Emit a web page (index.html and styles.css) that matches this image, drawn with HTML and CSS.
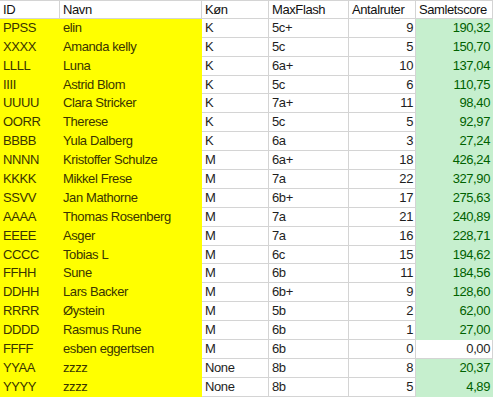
FILE: index.html
```html
<!DOCTYPE html>
<html>
<head>
<meta charset="utf-8">
<link rel="stylesheet" href="styles.css">
</head>
<body>
<div class="sheet">
  <div class="c h">ID</div><div class="c h">Navn</div><div class="c h">Køn</div><div class="c h">MaxFlash</div><div class="c h">Antalruter</div><div class="c h">Samletscore</div>

  <div class="c y">PPSS</div><div class="c y">elin</div><div class="c">K</div><div class="c">5c+</div><div class="c n">9</div><div class="c g">190,32</div>
  <div class="c y">XXXX</div><div class="c y">Amanda kelly</div><div class="c">K</div><div class="c">5c</div><div class="c n">5</div><div class="c g">150,70</div>
  <div class="c y">LLLL</div><div class="c y">Luna</div><div class="c">K</div><div class="c">6a+</div><div class="c n">10</div><div class="c g">137,04</div>
  <div class="c y">IIII</div><div class="c y">Astrid Blom</div><div class="c">K</div><div class="c">5c</div><div class="c n">6</div><div class="c g">110,75</div>
  <div class="c y">UUUU</div><div class="c y">Clara Stricker</div><div class="c">K</div><div class="c">7a+</div><div class="c n">11</div><div class="c g">98,40</div>
  <div class="c y">OORR</div><div class="c y">Therese</div><div class="c">K</div><div class="c">5c</div><div class="c n">5</div><div class="c g">92,97</div>
  <div class="c y">BBBB</div><div class="c y">Yula Dalberg</div><div class="c">K</div><div class="c">6a</div><div class="c n">3</div><div class="c g">27,24</div>
  <div class="c y">NNNN</div><div class="c y">Kristoffer Schulze</div><div class="c">M</div><div class="c">6a+</div><div class="c n">18</div><div class="c g">426,24</div>
  <div class="c y">KKKK</div><div class="c y">Mikkel Frese</div><div class="c">M</div><div class="c">7a</div><div class="c n">22</div><div class="c g">327,90</div>
  <div class="c y">SSVV</div><div class="c y">Jan Mathorne</div><div class="c">M</div><div class="c">6b+</div><div class="c n">17</div><div class="c g">275,63</div>
  <div class="c y">AAAA</div><div class="c y">Thomas Rosenberg</div><div class="c">M</div><div class="c">7a</div><div class="c n">21</div><div class="c g">240,89</div>
  <div class="c y">EEEE</div><div class="c y">Asger</div><div class="c">M</div><div class="c">7a</div><div class="c n">16</div><div class="c g">228,71</div>
  <div class="c y">CCCC</div><div class="c y">Tobias L</div><div class="c">M</div><div class="c">6c</div><div class="c n">15</div><div class="c g">194,62</div>
  <div class="c y">FFHH</div><div class="c y">Sune</div><div class="c">M</div><div class="c">6b</div><div class="c n">11</div><div class="c g">184,56</div>
  <div class="c y">DDHH</div><div class="c y">Lars Backer</div><div class="c">M</div><div class="c">6b+</div><div class="c n">9</div><div class="c g">128,60</div>
  <div class="c y">RRRR</div><div class="c y">Øystein</div><div class="c">M</div><div class="c">5b</div><div class="c n">2</div><div class="c g">62,00</div>
  <div class="c y">DDDD</div><div class="c y">Rasmus Rune</div><div class="c">M</div><div class="c">6b</div><div class="c n">1</div><div class="c g">27,00</div>
  <div class="c y">FFFF</div><div class="c y">esben eggertsen</div><div class="c">M</div><div class="c">6b</div><div class="c n">0</div><div class="c n">0,00</div>
  <div class="c y">YYAA</div><div class="c y">zzzz</div><div class="c">None</div><div class="c">8b</div><div class="c n">8</div><div class="c g">20,37</div>
  <div class="c y">YYYY</div><div class="c y">zzzz</div><div class="c">None</div><div class="c">8b</div><div class="c n">5</div><div class="c g">4,89</div>
</div>
</body>
</html>
```

FILE: styles.css
```css
html, body {
  margin: 0;
  padding: 0;
  background: #ffffff;
}

.sheet {
  display: grid;
  grid-template-columns: 60px 142px 67px 80px 67px 77px;
  grid-auto-rows: 18.9px;
  font-family: "Liberation Sans", Arial, sans-serif;
  font-size: 13px;
  letter-spacing: -0.4px;
  color: #1e1e1e;
}

.c {
  box-sizing: border-box;
  border-right: 1px solid #d4d4d4;
  border-bottom: 1px solid #d4d4d4;
  padding: 0 2px 0 3px;
  line-height: 18px;
  white-space: nowrap;
  overflow: hidden;
  background: #ffffff;
}

.h {
  border-top: 1px solid #d4d4d4;
  line-height: 17px;
  color: #111;
}

.y {
  background: #ffff00;
  border-right-color: #ffff00;
  border-bottom-color: #ffff00;
  color: #3a3500;
}

.n {
  text-align: right;
  padding: 0 2px 0 2px;
}

.g {
  text-align: right;
  padding: 0 2px 0 2px;
  background: #c6efce;
  border-right-color: #c6efce;
  border-bottom-color: #c6efce;
  color: #006100;
}
```
